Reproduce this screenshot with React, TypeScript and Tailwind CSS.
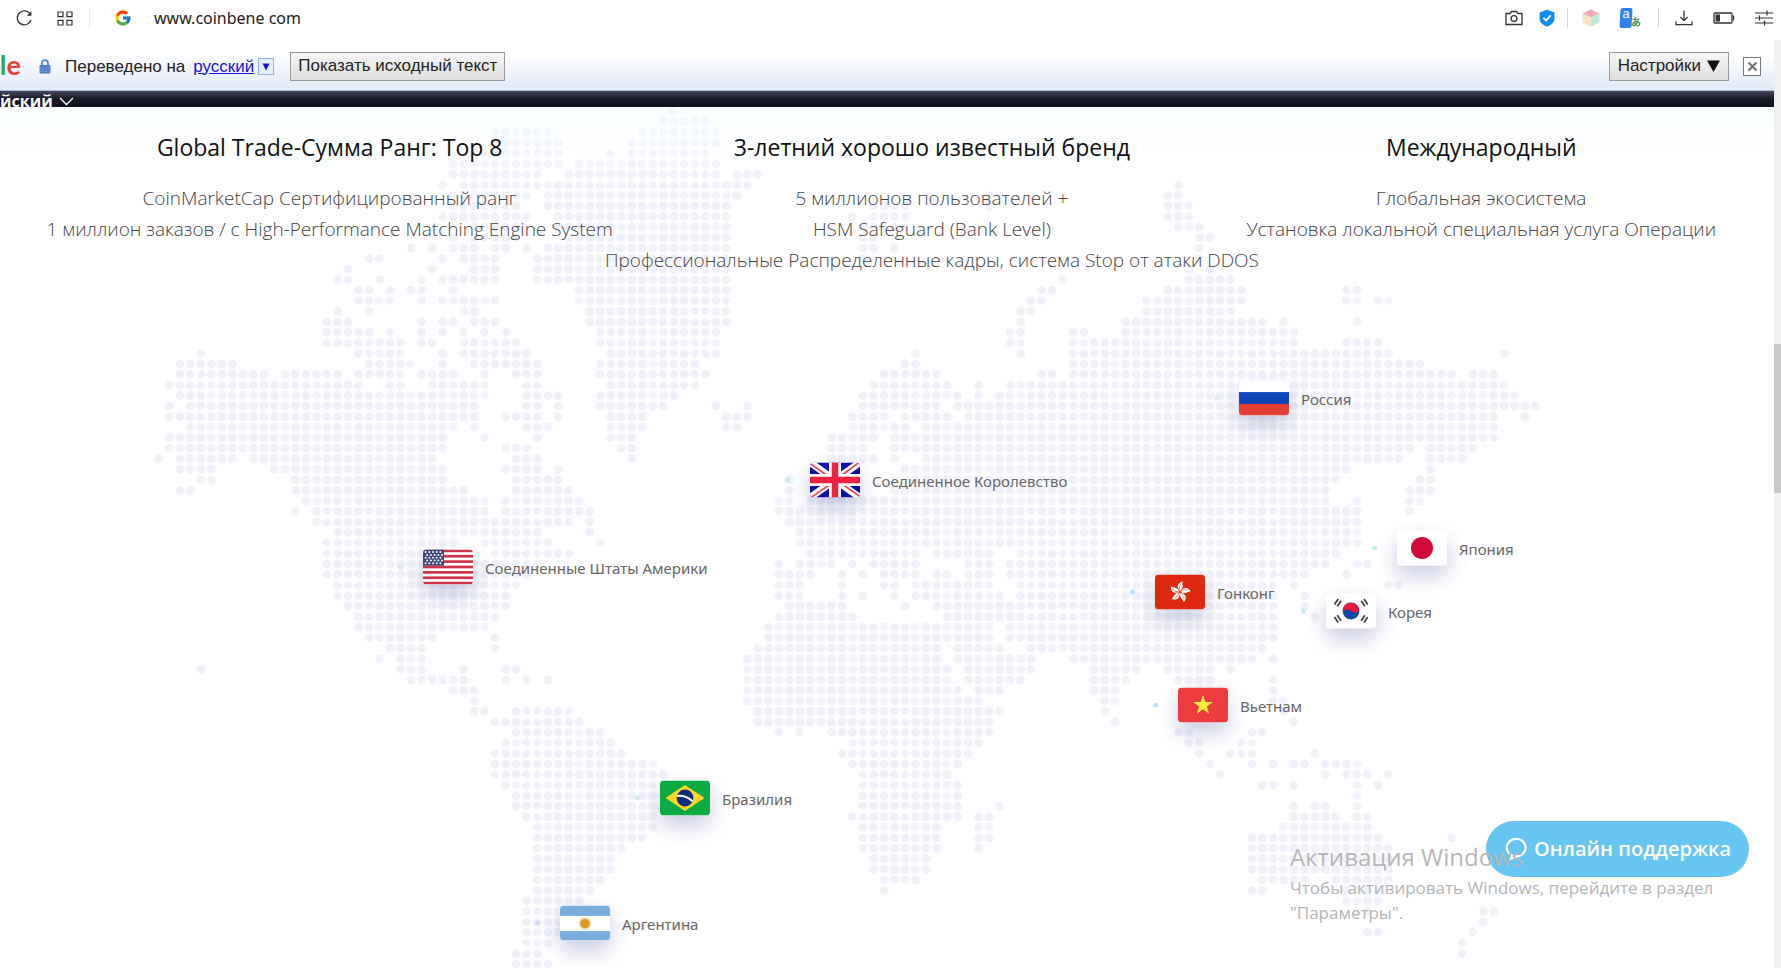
import type { ReactNode } from "react"
import { FcGoogle } from "react-icons/fc"
import { clsx } from "clsx"

const MAP_WIDTH = 1774
const MAP_HEIGHT = 861

// Each row lists the filled columns of the dotted map, as "start-end" or single numbers
const MAP_ROWS = [
  "49",
  "48-52",
  "32-37 46-53",
  "32-38 45-53",
  "31-38 43 45-52",
  "28-38 40-53",
  "28-36 39-53 55-57",
  "27 29-56 97",
  "28-35 37-55 79-80 96-97",
  "28-34 37-54 68-71 79 96-98",
  "27-35 38-54 66 68-71 96-98",
  "30-34 38-54 67-70 97-99",
  "28 30-34 39-54 67-68 99-100",
  "24 26 28-30 32-33 35 37-54 67-68 70 99",
  "20-21 27 29-32 36-54 67 99",
  "18 26 30-32 36-54 98 100",
  "17-18 21 25 27-32 36-54 86 98-102",
  "19-20 22 24-25 28 40-54 84-85 96-103 113-114",
  "19-22 25 27-32 40-54 83-84 94-103 113-114 116-117",
  "17 20 29-30 41-54 82-83 94-102",
  "16-18 25 27-28 30-32 41-54 82 92-105 107 114",
  "16-20 22 25 27 29 31 33 42-53 81-82 87-88 92-108",
  "16-23 25-26 29-34 42-53 81-82 87-108 113-116",
  "4 19-23 27 29-35 43-53 72 82 87-117 128",
  "2-7 20-24 27 30-36 42-51 71-72 87-120",
  "2-10 12-17 19-23 25-28 31 34-36 42-52 69-74 84-85 87-123 125-127",
  "1-19 22-23 26-31 35-36 43-51 68-75 78 81-128",
  "2-31 35-38 42-49 67-76 78 80-129",
  "1 3-30 35-36 38 42-48 53 56 67-74 76-131",
  "1-30 33-36 38 43-46 54-56 66-69 71-75 77-127 130",
  "3-28 30 35-37 43-46 54-55 66-71 73-127",
  "1-27 31 36 43-45 64-68 70-127",
  "1-27 33-35 44-45 64-67 70-119 121-125",
  "0 2-7 9-26 34-36 45 64-68 70 73-118 121-124",
  "2-5 11-27 33-36 38 71-113 121",
  "4-5 13-27 34-38 60 72-112 120-121",
  "2-3 13-29 34-39 60 70-111 119-121",
  "14-31 33-40 59-60 62-111 114 119-120",
  "13 15-31 33-41 59-114 119",
  "15-39 41 60-114",
  "17-36 41 61-114",
  "16-28 31-37 42 61-114",
  "16-28 32-39 62-72 74-79 82-112",
  "16-36 59 61-64 66 68-72 77-79 81-111 114-115",
  "16-35 59-62 65 67 69-72 74-75 77-79 81-109 113",
  "17-34 59-61 65 69-70 72-79 82-106 108 117-118",
  "17-33 59-61 65 67 70 72-80 82-106 109",
  "18-33 60-65 71 74-106 109",
  "19-32 59-66 75-106 110",
  "19-31 58-79 81-106",
  "20-26 32 58-79 81-106",
  "22-25 32 57-74 76-80 83-105",
  "21 23-25 56-74 76-83 87-104 106",
  "4 23-25 29 33-34 56-75 77-83 89-93 96-100 102",
  "24-29 33 35 37 56-75 77-82 89-92 97-100 106",
  "28-30 56-76 78-80 89-91 98-101 106",
  "30 56-78 90-91 98-101 106-107",
  "30-31 34-39 57-80 90 107",
  "32-40 57-79 91 108",
  "34-42 59 61 64-79 97-98 104-105",
  "33-43 66-78 98-99 103-104",
  "32-44 65-77 99 102-104 110",
  "32-47 66-76 100 104 106 108-109 111-114",
  "32-48 67-75 101 111 113-115 117",
  "33-48 67-76 105-106 108 114 116",
  "34-48 67-76 114",
  "34-47 67-76 80 108 110-111 114",
  "35-47 66-76 78-79 108-112 114-115",
  "36-47 67-74 78-79 107-115",
  "36-46 67-74 78-79 104-116 123",
  "36-44 67-74 78 104-117",
  "36-43 68-73 104-117",
  "36-43 68-73 104-117",
  "36-42 69-72 105-109 112-117",
  "36-41 69 104-105 113-116",
  "35-40 113-116",
  "35-38 114-115 126-127",
  "35-38 126",
  "35-38 115-116 125",
  "35-37 124",
  "34-36 124",
  "34-37",
]

const DOT_PATH = MAP_ROWS.map((row, r) =>
  row
    .split(" ")
    .map((run) => {
      const [start, end = start] = run.split("-").map(Number)
      let d = ""
      for (let c = start; c <= end; c++) {
        d += `M${(158.8 + c * 10.51).toFixed(1)} ${(4.2 + r * 10.53).toFixed(1)}h0`
      }
      return d
    })
    .join("")
).join("")

function WorldMap() {
  return (
    <svg viewBox={`0 0 ${MAP_WIDTH} ${MAP_HEIGHT}`} className="block w-full" aria-hidden="true">
      <path d={DOT_PATH} stroke="#f1f2f9" strokeWidth="8.8" strokeLinecap="round" fill="none" />
    </svg>
  )
}

/* Flags, all drawn on a 50x35 canvas */

function FlagUS() {
  return (
    <>
      <rect width="50" height="35" fill="#fff" />
      {[0, 1, 2, 3, 4, 5, 6].map((i) => (
        <rect key={i} y={i * 5.38} width="50" height="2.69" fill="#cf3348" />
      ))}
      <rect width="21" height="16.2" fill="#3f4277" />
      {[0, 1, 2, 3, 4].map((r) =>
        [0, 1, 2, 3, 4].map((c) => (
          <circle key={`${r}-${c}`} cx={2.6 + c * 3.7 + (r % 2 ? 1.6 : 0)} cy={2.6 + r * 2.8} r="1" fill="#fff" />
        ))
      )}
    </>
  )
}

function FlagUK() {
  return (
    <>
      <rect width="50" height="35" fill="#0f0fa8" />
      <path d="M0 0L50 35M50 0L0 35" stroke="#fff" strokeWidth="7" />
      <path d="M0 1L20 15M50 34L30 20M49 0L30 14M1 35L20 22" stroke="#e8495f" strokeWidth="1.6" />
      <path d="M25 0V35M0 17.5H50" stroke="#fff" strokeWidth="12" />
      <path d="M25 0V35M0 17.5H50" stroke="#ee2340" strokeWidth="6.5" />
    </>
  )
}

function FlagRussia() {
  return (
    <>
      <rect width="50" height="35" fill="#fff" />
      <rect y="11.6" width="50" height="12" fill="#0f45b8" />
      <rect y="23.4" width="50" height="11.6" fill="#e43d33" />
    </>
  )
}

function FlagJapan() {
  return (
    <>
      <rect width="50" height="35" fill="#fff" />
      <circle cx="25" cy="17.5" r="11" fill="#d10a37" />
    </>
  )
}

function FlagKorea() {
  return (
    <>
      <rect width="50" height="35" fill="#fff" />
      <circle cx="25" cy="17.5" r="8.4" fill="#0b47a5" />
      <path d="M17.3 14.3A8.4 8.4 0 0 1 33.3 16.6C31 20.5 27.6 19.6 25 17.5C22 15 18.8 15.6 16.8 19A8.4 8.4 0 0 1 17.3 14.3Z" fill="#e6183f" />
      <path
        d="M8.5 11L12.2 5.5M11.3 12.8L15 7.3M38 5.5L41.7 11M35.2 7.3L38.9 12.8M8.5 23.5L12.2 29M11.3 21.8L15 27.3M38 29L41.7 23.5M35.2 27.3L38.9 21.8"
        stroke="#444"
        strokeWidth="1.8"
      />
    </>
  )
}

function FlagHongKong() {
  return (
    <>
      <rect width="50" height="35" fill="#de2910" />
      {[0, 72, 144, 216, 288].map((angle) => (
        <g key={angle} transform={`translate(25 17.5) rotate(${angle + 12})`}>
          <path d="M0 -0.8C-4.8 -3.4 -4.6 -9 0.8 -10.8C-0.6 -8.6 3.8 -5.4 0 -0.8Z" fill="#fff" />
          <path d="M0 -1.5C-2 -3.5 -2.2 -5.5 -1 -7.5" stroke="#de2910" strokeWidth="0.5" fill="none" />
        </g>
      ))}
    </>
  )
}

function FlagVietnam() {
  return (
    <>
      <rect width="50" height="35" fill="#ec3c40" />
      <path d="M25 7.6L27.4 14.6H34.8L28.9 19L31.1 26.2L25 21.8L18.9 26.2L21.1 19L15.2 14.6H22.6Z" fill="#ffef3b" />
    </>
  )
}

function FlagBrazil() {
  return (
    <>
      <rect width="50" height="35" fill="#0bab42" />
      <path d="M25 4.5L44.5 17.5L25 30.5L5.5 17.5Z" fill="#fdd52b" />
      <circle cx="25" cy="17.5" r="8.4" fill="#0f2d80" />
      <path d="M17 15.4Q26 14.6 32.6 20.8" stroke="#fff" strokeWidth="2" fill="none" />
    </>
  )
}

function FlagArgentina() {
  return (
    <>
      <rect width="50" height="35" fill="#fff" />
      <rect width="50" height="10.4" fill="#78addf" />
      <rect y="25.6" width="50" height="9.4" fill="#78addf" />
      <circle cx="25" cy="18" r="6" fill="#e9cfa0" />
      <circle cx="25" cy="18" r="4.6" fill="#dd9723" />
    </>
  )
}

interface Pin {
  name: string
  x: number
  y: number
  flag: ReactNode
  dot: string
}

const PINS: Pin[] = [
  { name: "Россия", x: 1214, y: 291, flag: <FlagRussia />, dot: "bg-[#e0edf6]" },
  { name: "Соединенное Королевство", x: 785, y: 373, flag: <FlagUK />, dot: "bg-[#c8e8ee]" },
  { name: "Япония", x: 1372, y: 441, flag: <FlagJapan />, dot: "bg-[#c5eff2]" },
  { name: "Соединенные Штаты Америки", x: 398, y: 460, flag: <FlagUS />, dot: "bg-[#d8e9f0]" },
  { name: "Гонконг", x: 1130, y: 485, flag: <FlagHongKong />, dot: "bg-[#b8e2fb]" },
  { name: "Корея", x: 1301, y: 504, flag: <FlagKorea />, dot: "bg-[#c3eef4]" },
  { name: "Вьетнам", x: 1153, y: 598, flag: <FlagVietnam />, dot: "bg-[#b8e8f8]" },
  { name: "Бразилия", x: 635, y: 691, flag: <FlagBrazil />, dot: "bg-[#d8ebf0]" },
  { name: "Аргентина", x: 535, y: 816, flag: <FlagArgentina />, dot: "bg-[#c5daf5]" },
]

function MapPin({ pin }: { pin: Pin }) {
  return (
    <li
      className="absolute flex -translate-y-1/2 items-center"
      style={{ left: `${(pin.x / MAP_WIDTH) * 100}%`, top: `${(pin.y / MAP_HEIGHT) * 100}%` }}
    >
      <span className={clsx("mr-5 size-[5px] rounded-full", pin.dot)} />
      <svg
        viewBox="0 0 50 35"
        className="h-[35px] w-[50px] rounded-sm shadow-[0_10px_22px_rgba(60,70,150,0.28)]"
        aria-hidden="true"
      >
        {pin.flag}
      </svg>
      <span className="ml-3 font-['Noto_Sans',sans-serif] text-[15px] leading-5 whitespace-nowrap text-[#666]">
        {pin.name}
      </span>
    </li>
  )
}

const FEATURES = [
  {
    title: "Global Trade-Сумма Ранг: Top 8",
    lines: ["CoinMarketCap Сертифицированный ранг", "1 миллион заказов / с High-Performance Matching Engine System"],
  },
  {
    title: "3-летний хорошо известный бренд",
    lines: [
      "5 миллионов пользователей +",
      "HSM Safeguard (Bank Level)",
      "Профессиональные Распределенные кадры, система Stop от атаки DDOS",
    ],
  },
  {
    title: "Международный",
    lines: ["Глобальная экосистема", "Установка локальной специальная услуга Операции"],
  },
]

function BrowserBar() {
  return (
    <header className="flex h-10 shrink-0 items-center pb-1 pl-4 pr-2 text-[#333]">
      <button aria-label="Обновить">
        <svg width="17" height="18" viewBox="0 0 17 18" fill="none" stroke="currentColor" strokeWidth="1.3">
          <path d="M14.8 6.2A7 7 0 1 0 15 11" />
          <path d="M15.4 2.2V6.8H10.8Z" fill="currentColor" stroke="none" />
        </svg>
      </button>
      <button aria-label="Экспресс-панель" className="ml-6">
        <svg width="16" height="15" viewBox="0 0 16 15" fill="none" stroke="currentColor" strokeWidth="1.2">
          <path d="M1 1h5v4.6h-5zM10 1h5v4.6h-5zM1 9.4h5v4.6h-5zM10 9.4h5v4.6h-5z" />
        </svg>
      </button>
      <span className="ml-4 h-5 w-px bg-gray-200" />
      <FcGoogle className="ml-6 size-[18px]" />
      <input
        aria-label="Адрес"
        defaultValue="www.coinbene com"
        className="ml-[22px] min-w-0 flex-1 bg-transparent font-['Noto_Sans',sans-serif] text-[16px] leading-6 text-[#222] outline-none"
      />
      <button aria-label="Снимок экрана">
        <svg width="18" height="16" viewBox="0 0 18 16" fill="none" stroke="currentColor" strokeWidth="1.3">
          <path d="M1 3.5h4l1.5-2h5l1.5 2h4v11h-16z" />
          <circle cx="9" cy="8.6" r="2.9" />
        </svg>
      </button>
      <button aria-label="Защита" className="ml-4">
        <svg width="16" height="18" viewBox="0 0 16 18">
          <path d="M8 0.8L15.4 3.4V9.5C15.4 13.5 12 16 8 17.6C4 16 0.6 13.5 0.6 9.5V3.4Z" fill="#0c8df0" />
          <path d="M4.4 8.8L7.2 11.4L11.8 6.4" stroke="#fff" strokeWidth="1.8" fill="none" />
        </svg>
      </button>
      <span className="ml-3 h-5 w-px bg-gray-300" />
      <button aria-label="Расширение" className="ml-3.5">
        <svg width="18" height="18" viewBox="0 0 18 18">
          <path d="M9 0.5L17.5 4.4L9 8.6L0.5 4.4Z" fill="#f4a9b6" />
          <path d="M0.5 4.4L9 8.6V17.7L0.5 13.6Z" fill="#fbe3c6" />
          <path d="M17.5 4.4L9 8.6V17.7L17.5 13.6Z" fill="#bdebd9" />
        </svg>
      </button>
      <button aria-label="Переводчик" className="relative ml-5 h-5 w-5 text-left">
        <span className="block h-5 w-3 -skew-x-3 rounded-xs bg-[#2c83ee] text-center font-['Liberation_Sans',sans-serif] text-[13px] leading-3 text-white">a</span>
        <span className="absolute -right-px bottom-0 font-['Noto_Sans_CJK_JP',sans-serif] text-[10px] leading-3 font-bold text-[#3d9b46]">あ</span>
      </button>
      <span className="ml-[18px] h-5 w-px bg-gray-300" />
      <button aria-label="Загрузки" className="ml-4">
        <svg width="18" height="16" viewBox="0 0 18 16" fill="none" stroke="currentColor" strokeWidth="1.3">
          <path d="M9 0.5V10.5M5.5 7L9 10.6L12.5 7M1 11.5V14.6H17V11.5" />
        </svg>
      </button>
      <button aria-label="Батарея" className="ml-5">
        <svg width="22" height="12" viewBox="0 0 22 12" fill="none" stroke="currentColor" strokeWidth="1.3">
          <rect x="1" y="1" width="18" height="10" rx="1" />
          <rect x="2.5" y="2.5" width="4.5" height="7" fill="currentColor" stroke="none" />
          <path d="M20.5 3.5V8.5" />
        </svg>
      </button>
      <button aria-label="Настройки панели" className="ml-5">
        <svg width="18" height="16" viewBox="0 0 18 16" fill="none" stroke="currentColor" strokeWidth="1.2">
          <path d="M0 3H18M0 8H18M0 13H18M12 0.5V5.5M4.5 5.5V10.5M9.5 10.5V15.5" />
        </svg>
      </button>
    </header>
  )
}

function TranslateBar() {
  return (
    <div className="flex h-[47px] items-center border-b border-[#a9bbe0] bg-linear-to-b from-white from-20% to-[#e1eaf8] pr-[13px] pb-px font-['Liberation_Sans',sans-serif] text-[17px] leading-5 text-[#222]">
      <div className="flex w-[21px] shrink-0 justify-end overflow-hidden pb-1 font-['Lato',sans-serif] text-[27px] leading-8 font-bold">
        <span className="text-[#4285f4]">g</span>
        <span className="text-[#34a853]">l</span>
        <span className="text-[#ea4335]">e</span>
      </div>
      <svg width="12" height="15" viewBox="0 0 12 15" className="ml-[18px] shrink-0">
        <path d="M3 7V4.2A3 3 0 0 1 9 4.2V7" stroke="#5a86c6" strokeWidth="1.8" fill="none" />
        <rect x="0.5" y="6" width="11" height="8.5" rx="1" fill="#4c7dc4" />
        <path d="M1 8.5H11M1 10.5H11M1 12.5H11" stroke="#7ba3dc" strokeWidth="0.6" />
      </svg>
      <span className="ml-3.5">Переведено на</span>
      <a href="#lang" className="ml-2 text-[#1a10d8] underline">
        русский
      </a>
      <button aria-label="Выбрать язык" className="ml-1 flex h-[17px] w-4 items-center justify-center border border-[#8fb2e6] bg-[#e8f0fb]">
        <svg width="8" height="8" viewBox="0 0 8 8">
          <path d="M0.5 0.5H7.5L4 7.5Z" fill="#1a10d8" />
        </svg>
      </button>
      <button className="ml-4 h-[29px] border border-[#999] bg-linear-to-b from-[#f7f7f7] to-[#dedede] px-[7px] pb-px">
        Показать исходный текст
      </button>
      <button className="ml-auto flex h-[29px] items-center gap-1.5 border border-[#999] bg-linear-to-b from-[#f7f7f7] to-[#dedede] px-2 pb-px">
        Настройки
        <svg width="13" height="12" viewBox="0 0 13 12">
          <path d="M0 0.5H13L6.5 12Z" fill="#111" />
        </svg>
      </button>
      <button aria-label="Закрыть" className="ml-3.5 flex h-[19px] w-[18px] items-center justify-center border border-[#777] bg-white">
        <svg width="11" height="11" viewBox="0 0 11 11" stroke="#777" strokeWidth="2.4">
          <path d="M1.5 1.5L9.5 9.5M9.5 1.5L1.5 9.5" />
        </svg>
      </button>
    </div>
  )
}

export default function App() {
  return (
    <div className="flex h-screen flex-col overflow-hidden bg-white font-['Open_Sans',sans-serif]">
      <BrowserBar />
      <div className="flex min-h-0 flex-1">
        <div className="flex min-w-0 flex-1 flex-col pt-1">
          <TranslateBar />

          {/* Bottom edge of the site header */}
          <nav className="flex h-4 shrink-0 items-center overflow-hidden bg-linear-to-b from-[#46485c] via-[#161825] to-[#12131f]">
            <button className="flex items-center gap-1.5 pt-1 text-[16px] leading-5 font-bold text-white">
              йский
              <svg width="15" height="9" viewBox="0 0 15 9" fill="none" stroke="currentColor" strokeWidth="1.3">
                <path d="M1 1L7.5 7.5L14 1" />
              </svg>
            </button>
          </nav>

          <main className="relative min-h-0 flex-1 overflow-hidden">
            <div className="absolute inset-x-0 top-0">
              <WorldMap />
              <ul>
                {PINS.map((pin) => (
                  <MapPin key={pin.name} pin={pin} />
                ))}
              </ul>
            </div>

            <section className="relative grid grid-cols-[564fr_642fr_458fr] bg-linear-to-b from-[#f8feff]/50 to-transparent to-60% pt-6 pr-16 pl-12 text-center whitespace-nowrap">
              {FEATURES.map((feature) => (
                <div key={feature.title} className="flex min-w-0 flex-col items-center">
                  <h2 className="mb-5 text-[23px] leading-8 text-[#111]">{feature.title}</h2>
                  {feature.lines.map((line) => (
                    <p key={line} className="text-[19px] leading-[31px] font-light text-[#444]">
                      {line}
                    </p>
                  ))}
                </div>
              ))}
            </section>

            <button className="absolute right-[25px] bottom-[91px] flex h-14 items-center gap-1.5 rounded-full bg-[#67c5f2] px-[18px] text-[20px] font-semibold text-white">
              <svg width="24" height="24" viewBox="0 0 24 24" fill="none" stroke="currentColor" strokeWidth="2.2">
                <path d="M8.2 18.6A9.4 8.8 0 1 1 13 19.4L6.6 21.8L8.2 18.6Z" />
              </svg>
              Онлайн поддержка
            </button>

            {/* Activation watermark sits on top of everything */}
            <div className="pointer-events-none absolute right-[50px] bottom-[43px] w-[434px] text-[#b4b6b8]">
              <p className="text-[24px] leading-9">Активация Windows</p>
              <p className="text-[17px] leading-[25px]">Чтобы активировать Windows, перейдите в раздел "Параметры".</p>
            </div>
          </main>
        </div>

        {/* Scrollbar */}
        <div className="w-[7px] shrink-0 bg-[#f0f0f0]">
          <div className="mt-[304px] h-[149px] bg-[#c8c8c8]" />
        </div>
      </div>
    </div>
  )
}
